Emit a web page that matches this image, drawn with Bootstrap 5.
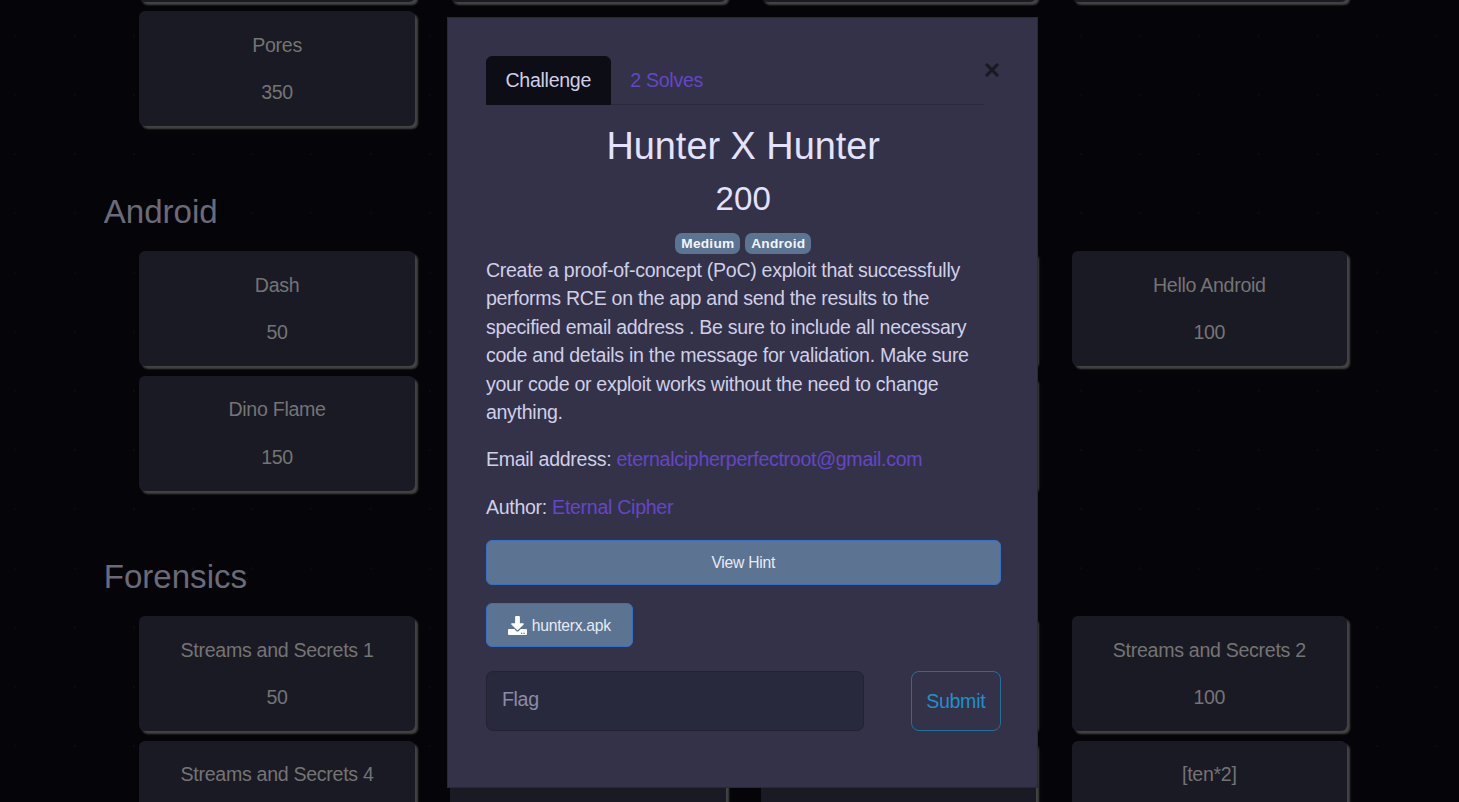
<!DOCTYPE html>
<html lang="en">
<head>
<meta charset="utf-8">
<meta name="viewport" content="width=device-width, initial-scale=1">
<title>Challenges</title>
<link href="https://cdn.jsdelivr.net/npm/bootstrap@5.3.0/dist/css/bootstrap.min.css" rel="stylesheet">
<style>
  html { font-size: 18.93px; }
  body {
    height: 100vh; overflow: hidden; color: #d0cfe6;
    font-size: 19.6px; letter-spacing: -.3px;
    font-family: "Liberation Sans", Arial, sans-serif;
    background: radial-gradient(circle at center, #0b0b10 0, #0b0b10 .8px, transparent 1.3px) 104.4px 6px / 59.2px 59.2px #050509;
  }
  .board { width: 1243px; height: 915px; overflow: hidden; margin: -113.4px 0 0 103.7px; padding-left: 18px; box-sizing: content-box; }
  .board h3 { font-size: 33.1px; letter-spacing: 0; line-height: 40px; margin: 56.5px 0 19px -18px; color: #6b6a78; font-weight: 400; }
  .board .row { --bs-gutter-x: 35.4px; margin: 0; }
  .tile {
    height: 115px; margin-bottom: 9.6px; padding-top: 19.6px; border-radius: 6px;
    background: #1a1a24; color: #747474; text-align: center; line-height: 28.4px;
    box-shadow: 3px 3px 2px #434343;
  }
  .tile p { margin-bottom: 18.9px; }
  .modal { overflow: hidden; }
  .modal-dialog { width: 591px; max-width: none; margin: 17.4px 0 0 447.3px; }
  .modal-content { height: 771px; background: #333249; border: 1px solid #29283b; border-radius: 0; color: #d0cfe6; }
  .modal-body { padding: 38px 36.8px 38px 37.6px; }
  .nav-tabs { width: 498px; border-bottom: 1px solid #29293b; }
  .nav-tabs .nav-link { padding: 9px 18.6px; line-height: 28.4px; border-color: transparent; border-radius: 6px 6px 0 0; color: #6546c4; }
  .nav-tabs .nav-link.active { background: #0d0d16; border-color: #0d0d16; color: #d0cfe6; }
  .closer { position: absolute; top: 45px; right: 38px; width: 14px; height: 14px; padding: 0; border: 0; background: none; color: #191924; display: block; }
  .closer svg { display: block; }
  .modal h2 { font-size: 37.86px; letter-spacing: 0; line-height: 45.4px; margin: 19px 0 9.5px; font-weight: 400; color: #e4e2fd; }
  .modal h3 { font-size: 33.1px; letter-spacing: 0; line-height: 39.7px; margin: 0 0 14.6px; font-weight: 400; color: #e4e2fd; }
  .tags { gap: 5.3px; margin-bottom: 1.8px; }
  .tags .badge { background: #5c7391; padding: 3.5px 5.6px 3.5px 5.8px; line-height: 14.2px; font-size: 13.7px; letter-spacing: .25px; border-radius: 7px; color: #f2f5fa; }
  .desc p { line-height: 28.4px; margin-bottom: 18.9px; }
  .desc a { color: #6546c4; text-decoration: none; }
  .btn-slate { height: 44.6px; font-size: 15.7px; letter-spacing: -.27px; background: #5c7391; border: 1px solid #3a70c4; border-radius: 6px; color: #e6ebf3; padding: 1px 21.2px 0; }
  .file-btn { margin: 18px 0 23.7px; }
  .flag { width: 378px; height: 60px; font-size: 19.6px; letter-spacing: -.3px; background: #29293d; border: 1px solid #222233; border-radius: 7px; padding: 0 15px 3px; }
  .flag::placeholder { color: #8c8ba6; opacity: 1; }
  .btn-submit { width: 89.5px; height: 60px; font-size: 19.6px; letter-spacing: -.3px; padding: 1px 0 0; color: #2090ca; border: 1px solid #22719c; border-radius: 8px; }
</style>
</head>
<body>
<main class="board">
  <div class="row row-cols-4">
    <div class="col"><div class="tile"></div></div>
    <div class="col"><div class="tile"></div></div>
    <div class="col"><div class="tile"></div></div>
    <div class="col"><div class="tile"></div></div>
    <div class="col"><div class="tile"><p>Pores</p><span>350</span></div></div>
  </div>
  <h3>Android</h3>
  <div class="row row-cols-4">
    <div class="col"><div class="tile"><p>Dash</p><span>50</span></div></div>
    <div class="col"><div class="tile"></div></div>
    <div class="col"><div class="tile"></div></div>
    <div class="col"><div class="tile"><p>Hello Android</p><span>100</span></div></div>
    <div class="col"><div class="tile"><p>Dino Flame</p><span>150</span></div></div>
    <div class="col"><div class="tile"></div></div>
    <div class="col"><div class="tile"></div></div>
  </div>
  <h3>Forensics</h3>
  <div class="row row-cols-4">
    <div class="col"><div class="tile"><p>Streams and Secrets 1</p><span>50</span></div></div>
    <div class="col"><div class="tile"></div></div>
    <div class="col"><div class="tile"></div></div>
    <div class="col"><div class="tile"><p>Streams and Secrets 2</p><span>100</span></div></div>
    <div class="col"><div class="tile"><p>Streams and Secrets 4</p></div></div>
    <div class="col"><div class="tile"></div></div>
    <div class="col"><div class="tile"></div></div>
    <div class="col"><div class="tile"><p>[ten*2]</p></div></div>
  </div>
</main>

<div class="modal d-block" tabindex="-1" role="dialog">
  <div class="modal-dialog">
    <div class="modal-content">
      <div class="modal-body">
        <button class="closer" type="button" aria-label="Close">
          <svg width="14" height="14" viewBox="0 0 14 14" fill="none" stroke="currentColor" stroke-width="2.9" stroke-linecap="round"><path d="M1.9 1.9 12.1 12.1M12.1 1.9 1.9 12.1"/></svg>
        </button>
        <ul class="nav nav-tabs">
          <li class="nav-item"><a class="nav-link active" href="#">Challenge</a></li>
          <li class="nav-item"><a class="nav-link" href="#">2 Solves</a></li>
        </ul>
        <h2 class="text-center">Hunter X Hunter</h2>
        <h3 class="text-center">200</h3>
        <div class="tags d-flex justify-content-center">
          <span class="badge">Medium</span><span class="badge">Android</span>
        </div>
        <div class="desc">
          <p>Create a proof-of-concept (PoC) exploit that successfully performs RCE on the app and send the results to the specified email address . Be sure to include all necessary code and details in the message for validation. Make sure your code or exploit works without the need to change anything.</p>
          <p>Email address: <a href="#">eternalcipherperfectroot@gmail.com</a></p>
          <p>Author: <a href="#">Eternal Cipher</a></p>
        </div>
        <button class="btn btn-slate w-100 d-block" type="button">View Hint</button>
        <a class="btn btn-slate file-btn d-inline-flex align-items-center" href="#">
          <svg class="me-1" width="19" height="19" viewBox="0 0 512 512" fill="#fff"><path d="M216 0h80c13.3 0 24 10.7 24 24v168h87.7c17.8 0 26.7 21.5 14.1 34.1L269.7 378.3c-7.5 7.5-19.8 7.5-27.3 0L90.1 226.1c-12.6-12.6-3.7-34.1 14.1-34.1H192V24c0-13.3 10.7-24 24-24zm296 376v112c0 13.3-10.7 24-24 24H24c-13.3 0-24-10.7-24-24V376c0-13.3 10.7-24 24-24h146.7l49 49c20.1 20.1 52.5 20.1 72.6 0l49-49H488c13.3 0 24 10.7 24 24zm-124 88c0-11-9-20-20-20s-20 9-20 20 9 20 20 20 20-9 20-20zm64 0c0-11-9-20-20-20s-20 9-20 20 9 20 20 20 20-9 20-20z"/></svg>
          hunterx.apk
        </a>
        <div class="d-flex justify-content-between">
          <input class="form-control flag" type="text" placeholder="Flag">
          <button class="btn btn-submit" type="button">Submit</button>
        </div>
      </div>
    </div>
  </div>
</div>
<script src="https://cdn.jsdelivr.net/npm/bootstrap@5.3.0/dist/js/bootstrap.bundle.min.js"></script>
</body>
</html>
